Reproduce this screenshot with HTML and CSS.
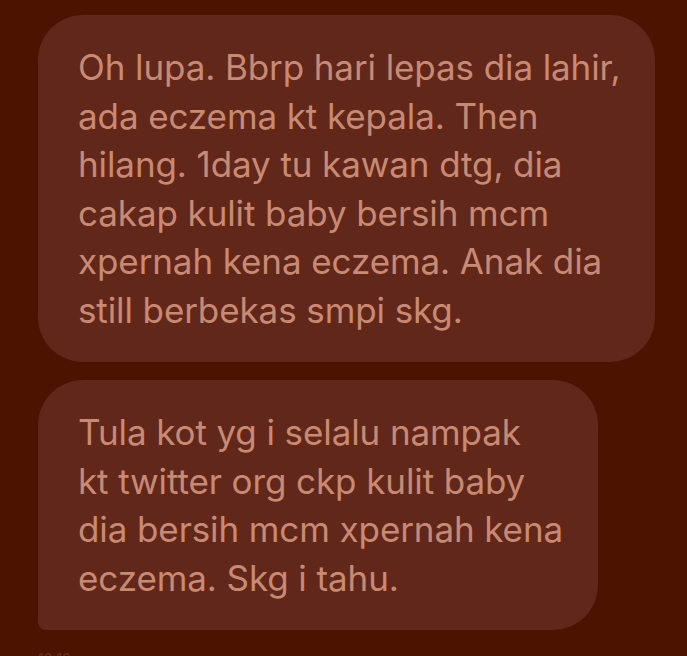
FILE: index.html
```html
<!DOCTYPE html>
<html>
<head>
<meta charset="utf-8">
<link rel="stylesheet" href="styles.css">
</head>
<body>
<div class="thread">
  <div class="bubble bubble-first">
    <p class="msg">Oh lupa. Bbrp hari lepas dia lahir,<br>ada eczema kt kepala. Then<br>hilang. 1day tu kawan dtg, dia<br>cakap kulit baby bersih mcm<br>xpernah kena eczema. Anak dia<br>still berbekas smpi skg.</p>
  </div>
  <div class="bubble bubble-last">
    <p class="msg">Tula kot yg i selalu nampak<br>kt twitter org ckp kulit baby<br>dia bersih mcm xpernah kena<br>eczema. Skg i tahu.</p>
  </div>
  <div class="meta">10:12</div>
</div>
</body>
</html>
```
FILE: styles.css
```css
html, body {
  margin: 0;
  padding: 0;
  background: #4b1300;
  overflow: hidden;
}
.thread {
  display: flex;
  flex-direction: column;
  align-items: flex-start;
  gap: 18px;
  padding: 15px 0 0 38px;
  font-family: Inter, "Noto Sans", sans-serif;
}
.bubble {
  background: #61271b;
  border-radius: 45px;
  padding: 28px 38px 28px 40px;
  box-sizing: border-box;
}
.bubble-first {
  width: 617px;
}
.bubble-last {
  width: 560px;
  border-bottom-left-radius: 8px;
}
.msg {
  margin: 0;
  color: #c98a73;
  font-size: 35px;
  line-height: 48.5px;
  letter-spacing: -0.1px;
  white-space: nowrap;
}
.meta {
  margin-top: 2px;
  color: #6b2f22;
  font-size: 14px;
}
```
